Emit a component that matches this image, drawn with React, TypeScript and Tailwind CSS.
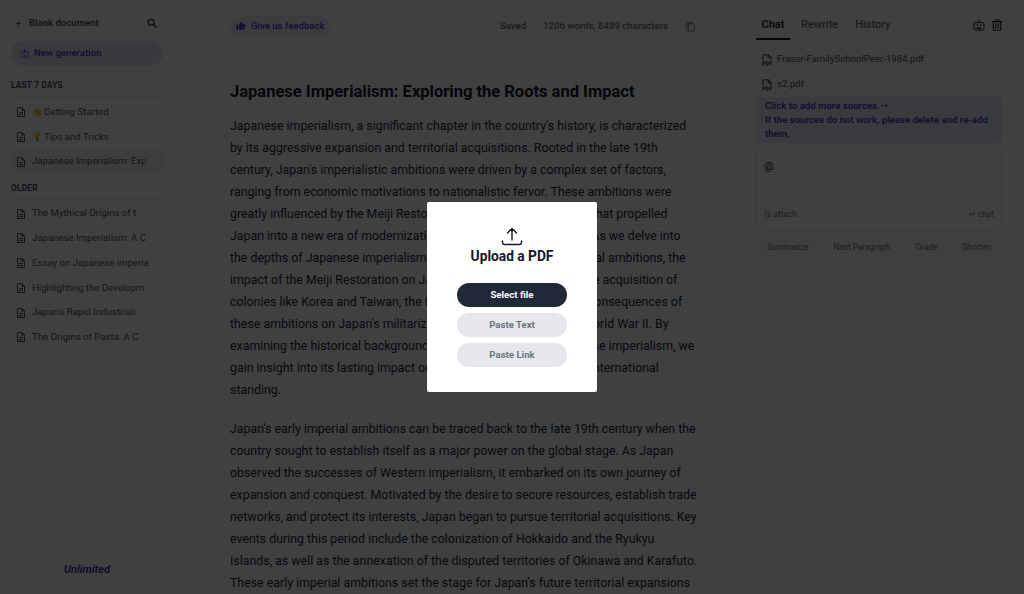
import { MdAdd, MdContentCopy, MdOutlineDescription, MdSearch, MdThumbUp } from 'react-icons/md';
import { FaRegTrashAlt } from 'react-icons/fa';
import { TbFileTypePdf } from 'react-icons/tb';

const recent = [
  { emoji: '👋', title: 'Getting Started' },
  { emoji: '💡', title: 'Tips and Tricks' },
  { title: 'Japanese Imperialism: Exp' },
];
const older = [
  'The Mythical Origins of t',
  'Japanese Imperialism: A C',
  'Essay on Japanese imperia',
  'Highlighting the Developm',
  "Japan's Rapid Industriali",
  'The Origins of Pasta: A C',
];

const intro = [
  "Japanese imperialism, a significant chapter in the country's history, is characterized",
  'by its aggressive expansion and territorial acquisitions. Rooted in the late 19th',
  "century, Japan's imperialistic ambitions were driven by a complex set of factors,",
  'ranging from economic motivations to nationalistic fervor. These ambitions were',
  'greatly influenced by the Meiji Restoration, a transformative stage that propelled',
  'Japan into a new era of modernization and rapid industrial power. As we delve into',
  'the depths of Japanese imperialism, we will explore its early colonial ambitions, the',
  "impact of the Meiji Restoration on Japan's expansionist agenda, the acquisition of",
  'colonies like Korea and Taiwan, the Pacific War outbreak, and the consequences of',
  "these ambitions on Japan's militarization and its path leading to World War II. By",
  'examining the historical background, drivers and events of Japanese imperialism, we',
  "gain insight into its lasting impact on both Japan's society and its international",
  'standing.',
];

const second = [
  "Japan's early imperial ambitions can be traced back to the late 19th century when the",
  'country sought to establish itself as a major power on the global stage. As Japan',
  'observed the successes of Western imperialism, it embarked on its own journey of',
  'expansion and conquest. Motivated by the desire to secure resources, establish trade',
  'networks, and protect its interests, Japan began to pursue territorial acquisitions. Key',
  'events during this period include the colonization of Hokkaido and the Ryukyu',
  'Islands, as well as the annexation of the disputed territories of Okinawa and Karafuto.',
  "These early imperial ambitions set the stage for Japan's future territorial expansions",
];

const actions = ['Summarize', 'Next Paragraph', 'Grade', 'Shorten'];

const BotIcon = ({ className }: { className: string }) => (
  <svg className={className} viewBox="0 0 24 24" fill="none" stroke="currentColor" strokeWidth="2">
    <path d="M12 2v5" strokeLinecap="round" />
    <rect x="2" y="7" width="20" height="15" rx="2.500" />
    <circle cx="8.500" cy="12" r="1.600" fill="currentColor" stroke="none" />
    <circle cx="15.500" cy="12" r="1.600" fill="currentColor" stroke="none" />
    <path d="M7 19.500c.5-2.500 2.500-3 5-3s4.500.5 5 3z" fill="currentColor" stroke="none" />
  </svg>
);

const DocRow = ({ title, emoji, active }: { title: string; emoji?: string; active?: boolean }) => (
  <div className={`flex h-[24.75px] items-center rounded-lg pl-[4px] text-[9.625px] text-[#4b5563] ${active ? 'bg-[#f3f4f6]' : ''}`}>
    <MdOutlineDescription className="mr-[5px] h-[12px] w-[12px] shrink-0" />
    {emoji && <span className="mr-[1px] text-[8.5px]">{emoji}</span>}
    <span className="whitespace-nowrap">{title}</span>
  </div>
);

const App = () => {
  return (
    <div className="relative flex h-screen overflow-hidden bg-white font-['Roboto',sans-serif] text-[#111827]">
      <aside className="flex w-[173px] shrink-0 flex-col border-r border-[#f3f4f6] pl-[11px] pr-[8px]">
        <div className="flex h-[41px] items-center justify-between pl-[3px] pr-[5px] pt-[5px]">
          <div className="flex items-center gap-[6px] text-[9.625px] font-medium text-[#374151]">
            <MdAdd className="h-[9px] w-[9px]" />
            Blank document
          </div>
          <MdSearch className="h-[13px] w-[13px]" />
        </div>
        <div className="flex h-[24.75px] w-[152px] items-center gap-[5px] rounded-full bg-[#e5e7f5] pl-[9px] text-[9.625px] font-medium text-[#4338ca]">
          <BotIcon className="h-[9px] w-[9px]" />
          New generation
        </div>
        <div className="mt-[13px] border-b border-[#e5e7eb] pb-[5px] text-[8.25px] font-semibold tracking-[0.03em] text-[#374151]">LAST 7 DAYS</div>
        <div className="mt-[2.5px] flex flex-col">
          {recent.map((r, i) => (
            <DocRow key={r.title} title={r.title} emoji={r.emoji} active={i === 2} />
          ))}
        </div>
        <div className="mt-[8px] border-b border-[#e5e7eb] pb-[5px] text-[8.25px] font-semibold tracking-[0.03em] text-[#374151]">OLDER</div>
        <div className="mt-[1px] flex flex-col">
          {older.map((t) => (
            <DocRow key={t} title={t} />
          ))}
        </div>
        <div className="mt-auto flex h-[50px] items-center justify-center pr-[1px] pt-[2px] text-[11px] font-semibold italic text-[#3730a3]">Unlimited</div>
      </aside>

      <main className="w-[583px] shrink-0 pl-[57px]">
        <div className="flex h-[52px] items-center justify-between pr-[56px]">
          <div className="flex h-[20px] w-[100px] items-center gap-[5px] rounded-full bg-[#eef0fb] pl-[6px] text-[9.625px] font-medium text-[#4338ca]">
            <MdThumbUp className="h-[10px] w-[10px]" />
            Give us feedback
          </div>
          <div className="flex items-center gap-[6px] text-[9.625px] font-medium text-[#6b7280]">
            <span className="flex h-[20px] items-center rounded bg-[#f9fafb] px-[5px]">Saved</span>
            <span className="flex h-[20px] items-center rounded bg-[#f9fafb] px-[6px]">1206 words, 8489 characters</span>
            <span className="flex h-[20px] w-[20px] items-center justify-center rounded bg-[#f9fafb]">
              <MdContentCopy className="h-[11px] w-[11px]" />
            </span>
          </div>
        </div>
        <h1 className="mt-[29px] text-[16.5px] font-bold leading-[22px] text-[#111827]">Japanese Imperialism: Exploring the Roots and Impact</h1>
        <div className="mt-[12px] whitespace-nowrap text-[12.375px] leading-[22px] text-[#1f2937]">
          <p>
            {intro.map((l) => (
              <span key={l} className="block">{l}</span>
            ))}
          </p>
          <p className="mt-[16.5px]">
            {second.map((l) => (
              <span key={l} className="block">{l}</span>
            ))}
          </p>
        </div>
      </main>

      <section className="flex w-[246px] shrink-0 flex-col">
        <div className="flex h-[47px] justify-between pt-[16px]">
          <div className="flex items-start text-[11px] font-medium leading-[18px] text-[#6b7280]">
            <span className="h-[24px] w-[34px] border-b-2 border-[#111827] text-center font-semibold text-[#111827]">Chat</span>
            <span className="ml-[11px]">Rewrite</span>
            <span className="ml-[17px]">History</span>
          </div>
          <div className="flex h-[18px] items-center gap-[7px]">
            <BotIcon className="h-[12px] w-[12px]" />
            <FaRegTrashAlt className="h-[12px] w-[10px]" />
          </div>
        </div>
        <div className="flex h-[25px] items-center gap-[3px] rounded-t bg-[#f9fafb] pl-[4px] text-[9.625px] text-[#4b5563]">
          <TbFileTypePdf className="h-[14px] w-[14px]" />
          Fraser-FamilySchoolPeer-1984.pdf
        </div>
        <div className="flex h-[25px] items-center gap-[3px] bg-[#f9fafb] pl-[4px] text-[9.625px] text-[#4b5563]">
          <TbFileTypePdf className="h-[14px] w-[14px]" />
          s2.pdf
        </div>
        <div className="h-[46px] rounded-b bg-[#e7e9f8] px-[9px] py-[2px] text-[9.625px] font-semibold leading-[13.75px] text-[#4338ca]">
          Click to add more sources.<span className="font-['DejaVu_Sans',sans-serif] font-normal">→</span>
          <br />
          If the sources do not work, please delete and re-add them.
        </div>
        <div className="mt-[4px] flex h-[84px] flex-col justify-between rounded-md border border-[#e5e7eb] px-[7px] pb-[10px] pt-[11px]">
          <div className="text-[11px] leading-[16px] text-[#111827]">@</div>
          <div className="flex justify-between text-[8.25px] text-[#6b7280]">
            <span>@ attach</span>
            <span>↵ chat</span>
          </div>
        </div>
        <div className="mt-[6.5px] flex justify-between text-[8.25px] text-[#6b7280]">
          {actions.map((a) => (
            <span key={a} className="flex h-[20px] items-center rounded bg-[#f9fafb] px-[11px]">{a}</span>
          ))}
        </div>
      </section>

      <div className="absolute inset-0 flex items-center justify-center bg-black/75">
        <div className="flex h-[190px] w-[170px] flex-col items-center rounded-[2px] bg-white pt-[24px]">
          <svg width="22" height="20" viewBox="0 0 22 20" fill="none" stroke="#111827" strokeWidth="1.4" strokeLinecap="round" strokeLinejoin="round">
            <path d="M11 14V2.500M6.500 7 11 2.500 15.500 7M1.500 15v1.500a2 2 0 0 0 2 2h15a2 2 0 0 0 2-2V15" />
          </svg>
          <div className="text-[13.75px] font-bold leading-[20px] text-[#111827]">Upload a PDF</div>
          <div className="mt-[16.5px] flex h-[24.75px] w-[110px] items-center justify-center rounded-full bg-[#1f2937] text-[9.625px] font-bold text-white">Select file</div>
          <div className="mt-[5.25px] flex h-[24.75px] w-[110px] items-center justify-center rounded-full bg-[#e5e7eb] text-[9.625px] font-bold text-[#6b7280]">Paste Text</div>
          <div className="mt-[5.25px] flex h-[24.75px] w-[110px] items-center justify-center rounded-full bg-[#e5e7eb] text-[9.625px] font-bold text-[#6b7280]">Paste Link</div>
        </div>
      </div>
    </div>
  );
};

export default App;
